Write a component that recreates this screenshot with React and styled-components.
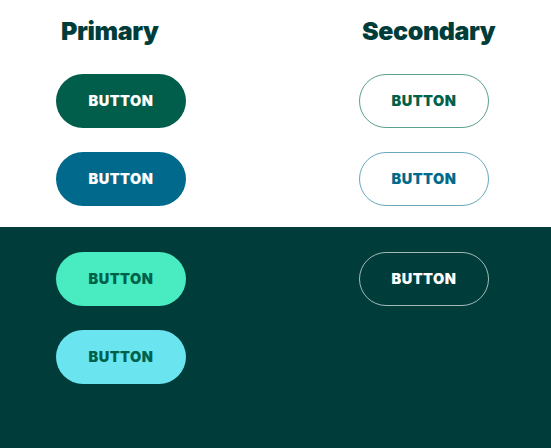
import styled, { createGlobalStyle } from "styled-components";

const Global = createGlobalStyle`
  html, body {
    margin: 0;
    padding: 0;
    background: #ffffff;
  }
  body {
    font-family: Inter, "Noto Sans", "Liberation Sans", sans-serif;
  }
`;

const Page = styled.div`
  width: 551px;
  height: 448px;
  display: flex;
  flex-direction: column;
`;

const Section = styled.section`
  background: ${props => (props.dark ? "#003d3a" : "#ffffff")};
  padding: ${props => (props.dark ? "25px 0 0 56px" : "0 0 0 56px")};
  height: ${props => (props.dark ? "auto" : "227px")};
  flex: ${props => (props.dark ? "1" : "none")};
  box-sizing: border-box;
  display: grid;
  grid-template-columns: 130px 130px;
  column-gap: 173px;
  align-content: start;
`;

const Column = styled.div`
  display: flex;
  flex-direction: column;
  gap: 24px;
`;

const Heading = styled.h2`
  margin: 0;
  height: 50px;
  padding: 16px 0 0 ${props => props.indent || 4}px;
  box-sizing: border-box;
  font-size: 25px;
  font-weight: 900;
  line-height: 30px;
  color: #003d3a;
  letter-spacing: -0.4px;
`;

const variants = {
  green: { bg: "#005e4a", border: "#005e4a", color: "#ffffff" },
  blue: { bg: "#00698c", border: "#00698c", color: "#ffffff" },
  mint: { bg: "#48ecc0", border: "#48ecc0", color: "#00614b" },
  cyan: { bg: "#6ae5ef", border: "#6ae5ef", color: "#00614b" },
  outlineGreen: { bg: "transparent", border: "#5b9f8e", color: "#00614b" },
  outlineBlue: { bg: "transparent", border: "#68a8bf", color: "#006a8c" },
  outlineLight: { bg: "transparent", border: "#a3bbb7", color: "#ffffff" },
};

const Button = styled.button`
  width: 130px;
  height: 54px;
  border-radius: 27px;
  box-sizing: border-box;
  border: ${props => (props.$outline ? "1.5px" : "0")} solid
    ${props => variants[props.$variant].border};
  background: ${props => variants[props.$variant].bg};
  color: ${props => variants[props.$variant].color};
  font-family: Inter, "Noto Sans", "Liberation Sans", sans-serif;
  font-size: 14.5px;
  font-weight: 900;
  letter-spacing: 0.5px;
  padding: 0 0 1px;
  cursor: pointer;
`;

export default function App() {
  return (
    <>
      <Global />
      <Page>
        <Section>
          <Column>
            <Heading indent={5}>Primary</Heading>
            <Button $variant="green">BUTTON</Button>
            <Button $variant="blue">BUTTON</Button>
          </Column>
          <Column>
            <Heading indent={3}>Secondary</Heading>
            <Button $variant="outlineGreen" $outline>BUTTON</Button>
            <Button $variant="outlineBlue" $outline>BUTTON</Button>
          </Column>
        </Section>
        <Section dark>
          <Column>
            <Button $variant="mint">BUTTON</Button>
            <Button $variant="cyan">BUTTON</Button>
          </Column>
          <Column>
            <Button $variant="outlineLight" $outline>BUTTON</Button>
          </Column>
        </Section>
      </Page>
    </>
  );
}
